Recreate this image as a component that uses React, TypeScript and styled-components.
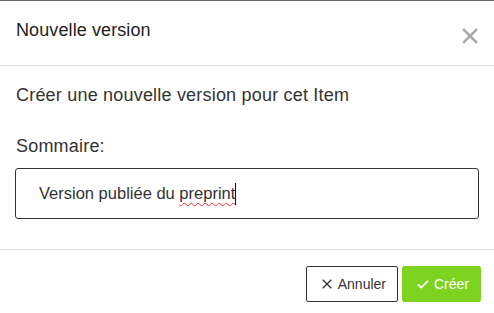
import React from "react";
import styled, { createGlobalStyle } from "styled-components";

const GlobalStyle = createGlobalStyle`
  html, body {
    margin: 0;
    padding: 0;
    background: #fff;
  }
  body {
    font-family: "Liberation Sans", Arial, sans-serif;
    color: #333;
  }
`;

const Dialog = styled.div`
  width: 494px;
  height: 313px;
  border-top: 1px solid #666;
  box-sizing: border-box;
  background: #fff;
  display: flex;
  flex-direction: column;
  overflow: hidden;
`;

const Header = styled.div`
  height: 65px;
  box-sizing: border-box;
  padding: 0 16px;
  display: flex;
  align-items: center;
  justify-content: space-between;
  border-bottom: 1px solid #ddd;
`;

const Title = styled.h4`
  margin: 0 0 5px;
  font-size: 18px;
  font-weight: normal;
  letter-spacing: 0.1px;
  color: #222;
`;

const CloseButton = styled.button`
  border: none;
  background: none;
  padding: 0;
  margin: 5px 0 0 0;
  width: 16px;
  height: 16px;
  display: flex;
  cursor: pointer;
`;

const Body = styled.div`
  height: 184px;
  box-sizing: border-box;
  padding: 16px 15px 0 16px;
  border-bottom: 1px solid #ddd;
`;

const Lead = styled.p`
  margin: 2px 0 29px;
  font-size: 18px;
  line-height: 22px;
  letter-spacing: 0.2px;
`;

const Label = styled.label`
  display: block;
  font-size: 18px;
  line-height: 22px;
  letter-spacing: 0.2px;
  margin-bottom: 11px;
`;

const TextBox = styled.div`
  height: 51px;
  box-sizing: border-box;
  margin-left: -1px;
  border: 1px solid #333;
  border-radius: 3px;
  padding: 0 23px;
  display: flex;
  align-items: center;
  font-size: 16.5px;
  color: #333;
`;

const Misspelled = styled.span`
  text-decoration: underline wavy #e33;
  text-decoration-thickness: 1px;
  text-underline-offset: 3px;
`;

const Caret = styled.span`
  display: inline-block;
  width: 1px;
  height: 22px;
  background: #111;
`;

const Footer = styled.div`
  display: flex;
  justify-content: flex-end;
  gap: 4px;
  padding: 16px 13px 0 0;
`;

const Button = styled.button<{ $primary?: boolean }>`
  height: 36px;
  box-sizing: border-box;
  padding: 0 11px 0 ${(p) => (p.$primary ? "14px" : "15px")};
  display: flex;
  align-items: center;
  gap: ${(p) => (p.$primary ? "5px" : "6px")};
  font-family: "Liberation Sans", Arial, sans-serif;
  font-size: 14px;
  border-radius: 2px;
  cursor: pointer;
  border: 1px solid ${(p) => (p.$primary ? "#7ed321" : "#333")};
  background: ${(p) => (p.$primary ? "#7ed321" : "#fff")};
  color: ${(p) => (p.$primary ? "#fff" : "#333")};
`;

const CrossIcon = ({ size, color, width }: { size: number; color: string; width: number }) => (
  <svg width={size} height={size} viewBox="0 0 16 16">
    <path d="M2 2L14 14M14 2L2 14" stroke={color} strokeWidth={width} strokeLinecap="square" />
  </svg>
);

const CheckIcon = () => (
  <svg width="12" height="12" viewBox="0 0 12 12">
    <path d="M1 6.5L4.3 9.6L11 2.8" stroke="#fff" strokeWidth="1.8" fill="none" />
  </svg>
);

export default function App() {
  return (
    <>
      <GlobalStyle />
      <Dialog>
        <Header>
          <Title>Nouvelle version</Title>
          <CloseButton aria-label="Fermer">
            <CrossIcon size={16} color="#aaa" width={2.6} />
          </CloseButton>
        </Header>
        <Body>
          <Lead>Créer une nouvelle version pour cet Item</Lead>
          <Label>Sommaire:</Label>
          <TextBox>
            Version publiée du&nbsp;<Misspelled>preprint</Misspelled>
            <Caret />
          </TextBox>
        </Body>
        <Footer>
          <Button>
            <CrossIcon size={10} color="#333" width={2.2} />
            Annuler
          </Button>
          <Button $primary>
            <CheckIcon />
            Créer
          </Button>
        </Footer>
      </Dialog>
    </>
  );
}
